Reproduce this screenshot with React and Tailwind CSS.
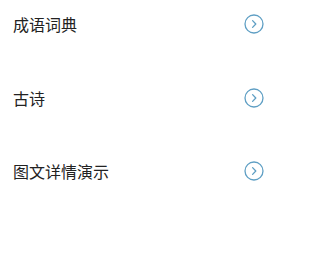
import React from "react";

const items = ["成语词典", "古诗", "图文详情演示"];

function Arrow() {
  return (
    <svg width="20" height="20" viewBox="0 0 20 20" fill="none">
      <circle cx="10" cy="10" r="9" stroke="#5f9fc4" strokeWidth="1.3" />
      <path d="M8.6 6.6 L11.8 10 L8.6 13.4" stroke="#5f9fc4" strokeWidth="1.3" strokeLinecap="round" strokeLinejoin="round" />
    </svg>
  );
}

export default function App() {
  return (
    <div
      className="w-[277px] h-[275px] bg-white flex flex-col gap-[25.5px]"
      style={{ fontFamily: '"Noto Sans CJK SC", "Noto Sans", sans-serif' }}
    >
      {items.map((t) => (
        <div key={t} className="h-[48px] flex items-center justify-between pl-[13px] pr-[13px]">
          <span className="text-[16px] leading-none text-[#222]">{t}</span>
          <Arrow />
        </div>
      ))}
    </div>
  );
}
